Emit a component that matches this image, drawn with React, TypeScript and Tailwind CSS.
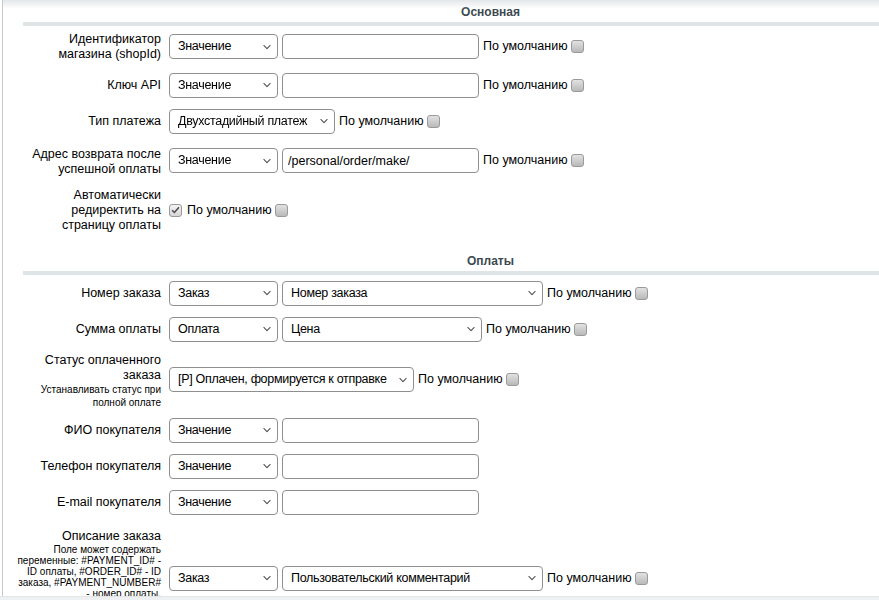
import React from 'react';

type SelectProps = { value: string; width: string };

const Chevron = () => (
  <svg
    className="pointer-events-none absolute right-[7px] top-1/2 -translate-y-1/2"
    width="8"
    height="5"
    viewBox="0 0 8 5"
    fill="none"
  >
    <path d="M0.6 0.7 L4 4.1 L7.4 0.7" stroke="#555" strokeWidth="1.1" />
  </svg>
);

const Select: React.FC<SelectProps> = ({ value, width }) => (
  <div className={`relative shrink-0 ${width}`}>
    <select
      defaultValue={value}
      className="block h-[25px] w-full appearance-none rounded-[4px] border border-[#8f8f8f] bg-white pl-[8px] pr-[17px] text-[12.5px] leading-[15px] tracking-[-0.3px] text-black outline-none"
    >
      <option>{value}</option>
    </select>
    <Chevron />
  </div>
);

const TextInput = ({ value = '' }: { value?: string }) => (
  <input
    defaultValue={value}
    className="block h-[25px] w-[197px] shrink-0 rounded-[4px] border border-[#8f8f8f] bg-white px-[5px] text-[12.5px] text-black outline-none"
  />
);

const Box = ({ checked = false }: { checked?: boolean }) => (
  <span
    className={`inline-flex h-[13px] w-[13px] shrink-0 items-center justify-center rounded-[3px] border border-[#9a9a9a] bg-linear-to-b ${
      checked ? 'from-[#f4f4f4] to-[#d6d6d6]' : 'from-[#e2e2e2] to-[#b9b9b9]'
    }`}
  >
    {checked && (
      <svg width="9" height="8" viewBox="0 0 9 8" fill="none">
        <path d="M1 4.2 L3.4 6.5 L8 1.2" stroke="#4a4a4a" strokeWidth="1.5" />
      </svg>
    )}
  </span>
);

const ByDefault = () => (
  <span className="flex items-center gap-[3px] whitespace-nowrap text-[12.5px] leading-[15px] text-black">
    По умолчанию
    <Box />
  </span>
);

type RowProps = {
  main: string[];
  hint?: string[];
  hintLeading?: string;
  labelClass?: string;
  children: React.ReactNode;
};

const Row: React.FC<RowProps> = ({ main, hint = [], hintLeading = 'leading-[13px]', labelClass = '', children }) => (
  <div className="flex items-center py-[5.5px]">
    <div className={`w-[162px] shrink-0 whitespace-nowrap pr-[4px] text-right text-black ${labelClass}`}>
      {main.map((line) => (
        <div key={line} className="text-[12.5px] leading-[15px]">
          {line}
        </div>
      ))}
      {hint.map((line) => (
        <div key={line} className={`text-[10px] ${hintLeading}`}>
          {line}
        </div>
      ))}
    </div>
    <div className="flex items-center gap-[4px] pl-[4px]">{children}</div>
  </div>
);

const Section = ({ title, first = false }: { title: string; first?: boolean }) => (
  <div className={first ? 'pt-[4.5px]' : 'pt-[15.5px]'}>
    <div className="w-[975px] text-center text-[12px] font-bold leading-[15px] text-[#3d4951]">{title}</div>
    <div className="ml-[20px] mt-[2.5px] h-[4px] bg-[#dfe5e7]" />
  </div>
);

export default function App() {
  return (
    <div className="relative min-h-screen w-full overflow-hidden bg-white font-['Liberation_Sans',Arial,sans-serif]">
      {/* shadow under the top toolbar */}
      <div className="pointer-events-none fixed left-[3px] right-0 top-0 h-[9px] bg-linear-to-b from-[#e3e7e9] to-white/0" />

      <div className="ml-[2px] min-h-screen border-l border-[#c6cacd]">
        <Section title="Основная" first />

        <Row main={['Идентификатор', 'магазина (shopId)']}>
          <Select value="Значение" width="w-[109px]" />
          <TextInput />
          <ByDefault />
        </Row>

        <Row main={['Ключ API']}>
          <Select value="Значение" width="w-[109px]" />
          <TextInput />
          <ByDefault />
        </Row>

        <Row main={['Тип платежа']}>
          <Select value="Двухстадийный платеж" width="w-[166px]" />
          <ByDefault />
        </Row>

        <Row main={['Адрес возврата после', 'успешной оплаты']} labelClass="mt-[2px]">
          <Select value="Значение" width="w-[109px]" />
          <TextInput value="/personal/order/make/" />
          <ByDefault />
        </Row>

        <Row main={['Автоматически', 'редиректить на', 'страницу оплаты']}>
          <div className="flex items-center gap-[5px]">
            <Box checked />
            <ByDefault />
          </div>
        </Row>

        <Section title="Оплаты" />

        <Row main={['Номер заказа']}>
          <Select value="Заказ" width="w-[109px]" />
          <Select value="Номер заказа" width="w-[261px]" />
          <ByDefault />
        </Row>

        <Row main={['Сумма оплаты']}>
          <Select value="Оплата" width="w-[109px]" />
          <Select value="Цена" width="w-[200px]" />
          <ByDefault />
        </Row>

        <Row
          main={['Статус оплаченного', 'заказа']}
          hint={['Устанавливать статус при', 'полной оплате']}
          labelClass="-mb-[2px]"
        >
          <Select value="[P] Оплачен, формируется к отправке" width="w-[245px]" />
          <ByDefault />
        </Row>

        <Row main={['ФИО покупателя']}>
          <Select value="Значение" width="w-[109px]" />
          <TextInput />
        </Row>

        <Row main={['Телефон покупателя']}>
          <Select value="Значение" width="w-[109px]" />
          <TextInput />
        </Row>

        <Row main={['E-mail покупателя']}>
          <Select value="Значение" width="w-[109px]" />
          <TextInput />
        </Row>

        <Row
          main={['Описание заказа']}
          hint={[
            'Поле может содержать',
            'переменные: #PAYMENT_ID# -',
            'ID оплаты, #ORDER_ID# - ID',
            'заказа, #PAYMENT_NUMBER#',
            '- номер оплаты,',
            '#ORDER_NUMBER# - номер',
            'заказа, #USER_EMAIL# - Email',
            'покупателя',
          ]}
          hintLeading="leading-[11px]"
          labelClass="mt-[3.5px] -mb-[1.5px]"
        >
          <Select value="Заказ" width="w-[109px]" />
          <Select value="Пользовательский комментарий" width="w-[261px]" />
          <ByDefault />
        </Row>
      </div>

      {/* edge of the bottom button panel */}
      <div className="pointer-events-none fixed inset-x-0 bottom-0 h-[4px] border-t border-[#e2e5e7] bg-[#eef0f1]" />
    </div>
  );
}
